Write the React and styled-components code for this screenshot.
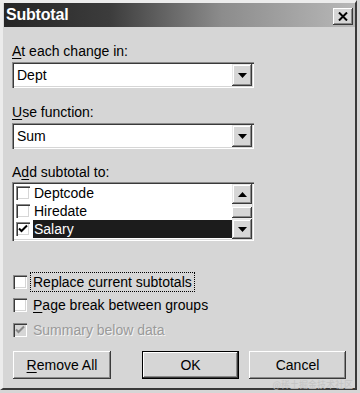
import { createGlobalStyle, styled } from "styled-components";

const GlobalStyle = createGlobalStyle`
  body {
    margin: 0;
    background: #d6d6d6;
    font-family: "Liberation Sans", Arial, sans-serif;
    font-size: 14px;
    color: #000;
  }
`;

// outer frame, light top/left and dark bottom/right like a classic window
const Window = styled.div`
  position: relative;
  box-sizing: border-box;
  width: 357px;
  height: 390px;
  background: #d6d6d6;
  border-top: 3px solid #ececec;
  border-left: 3px solid #ececec;
  border-right: 2px solid #3a3a3a;
  border-bottom: 2px solid #3a3a3a;
  display: flex;
  flex-direction: column;
`;

const TitleBar = styled.div`
  height: 24px;
  margin-left: 1px;
  margin-right: 0;
  display: flex;
  align-items: center;
  justify-content: space-between;
  padding: 0 2px 0 2px;
  background: linear-gradient(to right, #262626 0%, #3c3c3c 30%, #8c8c8c 62%, #b8b8b8 100%);
`;

const Title = styled.span`
  color: #fff;
  font-weight: bold;
  font-size: 16px;
  letter-spacing: -0.2px;
`;

const CloseButton = styled.div`
  width: 20px;
  height: 17px;
  margin-top: 3px;
  box-sizing: border-box;
  background: #d6d6d6;
  box-shadow: inset -1px -1px #3a3a3a, inset 1px 1px #ffffff, inset -2px -2px #8a8a8a;
  display: flex;
  align-items: center;
  justify-content: center;
`;

const Body = styled.div`
  padding: 0 9px;
  display: flex;
  flex-direction: column;
  align-items: flex-start;
`;

const FieldLabel = styled.div`
  line-height: 16px;
  margin-top: ${(p) => p.$top}px;
  margin-bottom: ${(p) => p.$bottom}px;
`;

const Key = styled.span`
  text-decoration: underline;
  text-underline-offset: 2px;
`;

const Sunken = styled.div`
  box-sizing: border-box;
  background: #fff;
  box-shadow: inset 1px 1px #8a8a8a, inset 2px 2px #3a3a3a, inset -1px -1px #ffffff, inset -2px -2px #d6d6d6;
`;

const Combo = styled(Sunken)`
  width: 242px;
  height: 26px;
  padding: 2px;
  display: flex;
  align-items: stretch;
`;

const ComboValue = styled.div`
  flex: 1;
  display: flex;
  align-items: center;
  padding-left: 3px;
`;

const ArrowButton = styled.div`
  width: 20px;
  height: ${(p) => p.$h || 22}px;
  box-sizing: border-box;
  background: #d6d6d6;
  box-shadow: inset -1px -1px #3a3a3a, inset 1px 1px #e8e8e8, inset -2px -2px #8a8a8a, inset 2px 2px #ffffff;
  display: flex;
  align-items: center;
  justify-content: center;
`;

const ListBox = styled(Sunken)`
  width: 242px;
  height: 59px;
  padding: 2px;
  display: flex;
`;

const Items = styled.div`
  flex: 1;
  display: flex;
  flex-direction: column;
`;

const ListItem = styled.div`
  height: 18px;
  display: flex;
  align-items: center;
  padding-left: 2px;
`;

const ItemText = styled.span`
  flex: 1;
  align-self: stretch;
  display: flex;
  align-items: center;
  margin-left: 3px;
  padding-left: 1px;
  background: ${(p) => (p.$selected ? "#1c1c1c" : "transparent")};
  color: ${(p) => (p.$selected ? "#fff" : "#000")};
`;

const Scrollbar = styled.div`
  width: 20px;
  display: flex;
  flex-direction: column;
`;

const Track = styled.div`
  flex: 1;
  background: #ececec;
  padding-top: 3px;
`;

const Thumb = styled.div`
  height: 11px;
  background: #d6d6d6;
  box-shadow: inset -1px -1px #3a3a3a, inset 1px 1px #ffffff, inset -2px -2px #8a8a8a;
`;

const Box = styled.div`
  width: 14px;
  height: 14px;
  box-sizing: border-box;
  flex-shrink: 0;
  background: ${(p) => (p.$disabled ? "#d6d6d6" : "#fff")};
  box-shadow: inset 1px 1px #8a8a8a, inset 2px 2px #3a3a3a, inset -1px -1px #ffffff, inset -2px -2px #d6d6d6;
  display: flex;
  align-items: center;
  justify-content: center;
`;

const Options = styled.div`
  margin-top: 31px;
  display: flex;
  flex-direction: column;
  gap: ${(p) => p.$gap}px;
`;

const OptionRow = styled.div`
  height: 20px;
  display: flex;
  align-items: center;
  padding-left: 1px;
  gap: 4px;
  margin-top: ${(p) => p.$top || 0}px;
`;

const OptionText = styled.span`
  line-height: 16px;
  padding: 1px 2px;
  outline: ${(p) => (p.$focus ? "1px dotted #000" : "none")};
  color: ${(p) => (p.$disabled ? "#9a9a9a" : "#000")};
  text-shadow: ${(p) => (p.$disabled ? "1px 1px #f4f4f4" : "none")};
`;

const ButtonRow = styled.div`
  margin-top: 11px;
  padding-left: 1px;
  display: flex;
`;

const Button = styled.div`
  width: ${(p) => p.$w}px;
  height: 28px;
  margin-left: ${(p) => p.$left || 0}px;
  box-sizing: border-box;
  display: flex;
  align-items: center;
  justify-content: center;
  background: #d6d6d6;
  box-shadow: ${(p) =>
    p.$default
      ? "inset -1px -1px #000, inset 1px 1px #000, inset -2px -2px #3a3a3a, inset 2px 2px #ffffff, inset -3px -3px #8a8a8a"
      : "inset -1px -1px #3a3a3a, inset 1px 1px #ffffff, inset -2px -2px #8a8a8a"};
`;

const Watermark = styled.span`
  position: absolute;
  right: 2px;
  bottom: -3px;
  font-family: "Noto Sans CJK SC", sans-serif;
  font-size: 9px;
  color: #c4c4c4;
`;

function DownArrow() {
  return (
    <svg width="9" height="5" viewBox="0 0 9 5">
      <path d="M0 0h9L4.5 5z" fill="#000" />
    </svg>
  );
}

function UpArrow() {
  return (
    <svg width="9" height="5" viewBox="0 0 9 5">
      <path d="M0 5h9L4.5 0z" fill="#000" />
    </svg>
  );
}

function Check({ color = "#000" }) {
  return (
    <svg width="10" height="10" viewBox="0 0 10 10">
      <path d="M1 4.5l2.5 2.5L9 1.5" stroke={color} strokeWidth="2" fill="none" />
    </svg>
  );
}

function CheckBox({ checked, disabled }) {
  return <Box $disabled={disabled}>{checked && <Check color={disabled ? "#8a8a8a" : "#000"} />}</Box>;
}

const fields = [
  { name: "Deptcode", checked: false },
  { name: "Hiredate", checked: false },
  { name: "Salary", checked: true },
];

export default function App() {
  return (
    <>
      <GlobalStyle />
      <Window>
        <TitleBar>
          <Title>Subtotal</Title>
          <CloseButton>
            <svg width="10" height="9" viewBox="0 0 10 9">
              <path d="M1 0.5l8 8M9 0.5l-8 8" stroke="#000" strokeWidth="2" />
            </svg>
          </CloseButton>
        </TitleBar>
        <Body>
          <FieldLabel $top={16} $bottom={3}>
            <Key>A</Key>t each change in:
          </FieldLabel>
          <Combo>
            <ComboValue>Dept</ComboValue>
            <ArrowButton>
              <DownArrow />
            </ArrowButton>
          </Combo>

          <FieldLabel $top={16} $bottom={3}>
            <Key>U</Key>se function:
          </FieldLabel>
          <Combo>
            <ComboValue>Sum</ComboValue>
            <ArrowButton>
              <DownArrow />
            </ArrowButton>
          </Combo>

          <FieldLabel $top={15} $bottom={2}>
            A<Key>d</Key>d subtotal to:
          </FieldLabel>
          <ListBox>
            <Items>
              {fields.map((f) => (
                <ListItem key={f.name}>
                  <CheckBox checked={f.checked} />
                  <ItemText $selected={f.checked}>{f.name}</ItemText>
                </ListItem>
              ))}
            </Items>
            <Scrollbar>
              <ArrowButton $h={20}>
                <UpArrow />
              </ArrowButton>
              <Track>
                <Thumb />
              </Track>
              <ArrowButton $h={20}>
                <DownArrow />
              </ArrowButton>
            </Scrollbar>
          </ListBox>

          <Options $gap={3}>
            <OptionRow>
              <CheckBox />
              <OptionText $focus>
                Replace <Key>c</Key>urrent subtotals
              </OptionText>
            </OptionRow>
            <OptionRow>
              <CheckBox />
              <OptionText>
                <Key>P</Key>age break between groups
              </OptionText>
            </OptionRow>
            <OptionRow $top={2}>
              <CheckBox checked disabled />
              <OptionText $disabled>Summary below data</OptionText>
            </OptionRow>
          </Options>

          <ButtonRow>
            <Button $w={98}>
              <span>
                <Key>R</Key>emove All
              </span>
            </Button>
            <Button $w={97} $left={31} $default>
              OK
            </Button>
            <Button $w={97} $left={10}>
              Cancel
            </Button>
          </ButtonRow>
        </Body>
        <Watermark>@稀土掘金技术社区</Watermark>
      </Window>
    </>
  );
}
